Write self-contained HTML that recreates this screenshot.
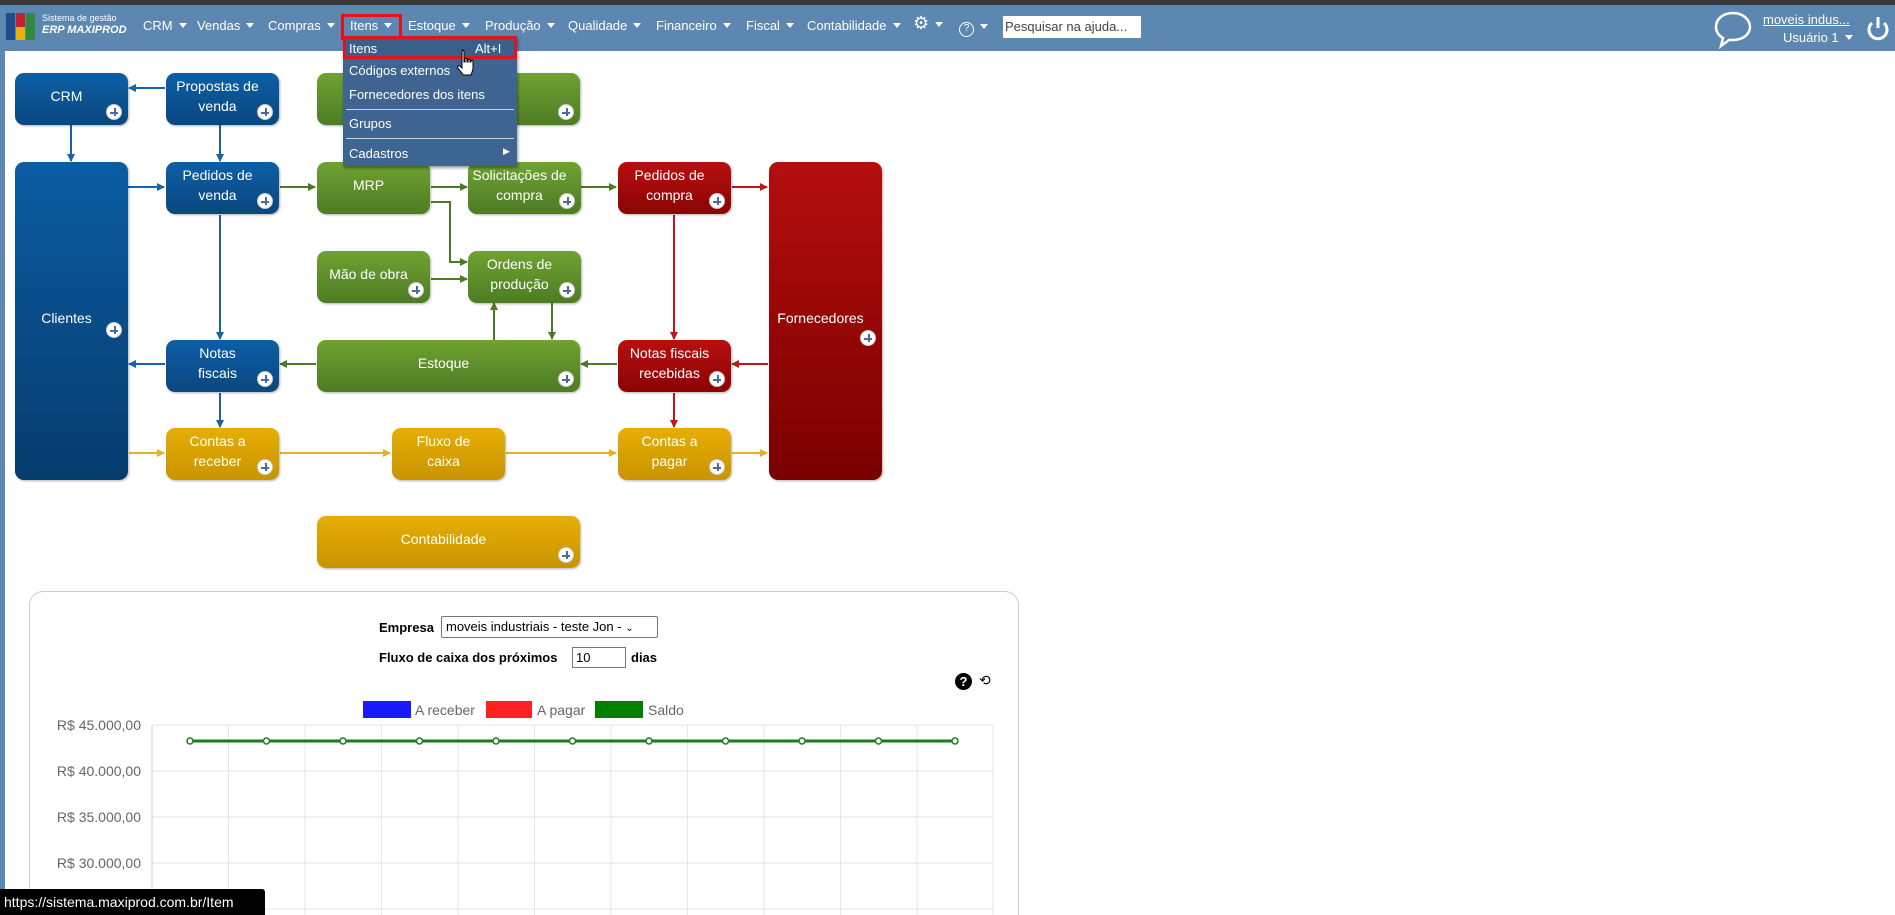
<!DOCTYPE html>
<html style="height:915px;overflow:hidden"><head><meta charset="utf-8">
<style>
*{box-sizing:border-box}
body{margin:0;width:1895px;height:915px;overflow:hidden;background:#fff;font-family:"Liberation Sans",sans-serif;position:relative}
#top{position:absolute;left:0;top:0;width:1895px;height:5px;background:#3a3a3a}
#nav{position:absolute;left:0;top:5px;width:1895px;height:46px;background:#5b87b1;color:#fff;font-size:13px}
#lstrip{position:absolute;left:0;top:51px;width:5px;height:864px;background:#5b87b1}
.ni{position:absolute;top:13px;white-space:nowrap}
.ni:after{content:"";display:inline-block;margin-left:6px;border-left:4px solid transparent;border-right:4px solid transparent;border-top:5px solid #fff;vertical-align:2px}
.bx{position:absolute;border-radius:9px;color:#fff;font-size:14px;text-align:center;display:flex;align-items:center;justify-content:center;line-height:20px;padding:0 10px 6px 0;box-shadow:1px 1px 2px rgba(0,0,0,.3)}
.b{background:linear-gradient(#0d5fa6,#0a477f)}
.b.t{background:linear-gradient(#0b5ca3,#073c6e)}
.g{background:linear-gradient(#6fa232,#4d7c24)}
.r{background:linear-gradient(#b80f0f,#8a0404)}
.r.t{background:linear-gradient(#b50e0e,#7a0000)}
.y{background:linear-gradient(#e6ae05,#c99400)}
.bx i{position:absolute;right:6px;bottom:5px;width:16px;height:16px;border-radius:50%;background:#fff;border:1px solid #ccc}
.bx i:before{content:"";position:absolute;left:3px;top:6.5px;width:8px;height:2px;background:#4a6a99}
.bx i:after{content:"";position:absolute;left:6.5px;top:3px;width:2px;height:8px;background:#4a6a99}
#menu{position:absolute;left:343px;top:36px;width:174px;height:130px;background:#3e6591;color:#fff;font-size:13px;box-shadow:1px 2px 3px rgba(0,0,0,.4)}
#menu div{position:absolute;left:6px}
.sep{position:absolute;left:3px;width:168px;height:1px;background:#c8d4e2}
#panel{position:absolute;left:29px;top:591px;width:990px;height:324px;border:1px solid #ccc;border-bottom:none;border-radius:14px 14px 0 0}
</style></head><body>
<div id="top"></div>
<div id="nav">
 <div style="position:absolute;left:6px;top:8px;width:30px;height:27px;">
  <div style="position:absolute;left:0;top:0;width:9px;height:27px;background:#1f4d8c"></div>
  <div style="position:absolute;left:10px;top:0;width:9px;height:14px;background:#c6212a"></div>
  <div style="position:absolute;left:10px;top:14px;width:9px;height:13px;background:#e8b400"></div>
  <div style="position:absolute;left:20px;top:0;width:9px;height:27px;background:#2e8b3c"></div>
 </div>
 <div style="position:absolute;left:42px;top:8px;font-size:9px;line-height:10px">Sistema de gestão</div>
 <div style="position:absolute;left:42px;top:19px;font-size:11px;font-weight:bold;font-style:italic">ERP MAXIPROD</div>
 <div class="ni" style="left:143px">CRM</div>
 <div class="ni" style="left:197px">Vendas</div>
 <div class="ni" style="left:268px">Compras</div>
 <div style="position:absolute;left:341px;top:9px;width:61px;height:26px;border:3px solid #e0141c"></div>
 <div class="ni" style="left:350px">Itens</div>
 <div class="ni" style="left:408px">Estoque</div>
 <div class="ni" style="left:485px">Produção</div>
 <div class="ni" style="left:568px">Qualidade</div>
 <div class="ni" style="left:656px">Financeiro</div>
 <div class="ni" style="left:746px">Fiscal</div>
 <div class="ni" style="left:807px">Contabilidade</div>
 <div class="ni" style="left:913px;font-size:18px;top:8px">⚙</div>
 <div class="ni" style="left:959px;top:14px"><span style="display:inline-block;width:15px;height:15px;border:1.5px solid #fff;border-radius:50%;font-size:10px;text-align:center;line-height:12px">?</span></div>
 <div style="position:absolute;left:1003px;top:11px;width:138px;height:22px;background:#fff;color:#444;font-size:13px;padding:3px 2px">Pesquisar na ajuda...</div>
 <svg style="position:absolute;left:1712px;top:5px" width="42" height="40"><path d="M21 3C11 3 4 9 4 17c0 5 3 9 7 11l-2 8 8-6c1 0 3 0 4 0 10 0 17-6 17-13S31 3 21 3z" fill="none" stroke="#fff" stroke-width="2.5"/></svg>
 <div style="position:absolute;left:1763px;top:7px;text-decoration:underline;font-size:13px">moveis indus...</div>
 <div class="ni" style="left:1783px;top:25px">Usuário 1</div>
 <svg style="position:absolute;left:1866px;top:10px" width="24" height="26"><path d="M6 8a9 9 0 1 0 12 0" fill="none" stroke="#fff" stroke-width="3"/><path d="M12 2v11" stroke="#fff" stroke-width="3"/></svg>
</div>
<div id="lstrip"></div>

<svg style="position:absolute;left:0;top:0" width="900" height="580">
<defs>
<marker id="mb" markerWidth="8" markerHeight="8" refX="7" refY="4" orient="auto" markerUnits="userSpaceOnUse"><path d="M0 0L8 4L0 8z" fill="#1764a8"/></marker>
<marker id="mg" markerWidth="8" markerHeight="8" refX="7" refY="4" orient="auto" markerUnits="userSpaceOnUse"><path d="M0 0L8 4L0 8z" fill="#4d7a27"/></marker>
<marker id="mr" markerWidth="8" markerHeight="8" refX="7" refY="4" orient="auto" markerUnits="userSpaceOnUse"><path d="M0 0L8 4L0 8z" fill="#c0161a"/></marker>
<marker id="my" markerWidth="8" markerHeight="8" refX="7" refY="4" orient="auto" markerUnits="userSpaceOnUse"><path d="M0 0L8 4L0 8z" fill="#e9b020"/></marker>
</defs>
<g stroke="#1764a8" stroke-width="2" fill="none" marker-end="url(#mb)">
<path d="M165 88H129"/><path d="M71 125V161"/><path d="M220 125V161"/><path d="M128 187H164"/><path d="M220 215V339"/><path d="M165 364H129"/><path d="M220 393V427"/>
</g>
<g stroke="#4d7a27" stroke-width="2" fill="none" marker-end="url(#mg)">
<path d="M280 187H315"/><path d="M431 187H467"/><path d="M431 202H450V262H467"/><path d="M431 279H467"/><path d="M494 340V303"/><path d="M552 303V339"/><path d="M316 364H280"/><path d="M617 364H581"/><path d="M581 187H616"/>
</g>
<g stroke="#c0161a" stroke-width="2" fill="none" marker-end="url(#mr)">
<path d="M732 187H767"/><path d="M674 215V339"/><path d="M768 364H732"/><path d="M674 393V427"/>
</g>
<g stroke="#e9b020" stroke-width="2" fill="none" marker-end="url(#my)">
<path d="M129 453H164"/><path d="M280 453H390"/><path d="M506 453H616"/><path d="M732 453H767"/>
</g>
</svg>

<div class="bx b" style="left:15px;top:73px;width:113px;height:52px">CRM<i></i></div>
<div class="bx b" style="left:166px;top:73px;width:113px;height:52px">Propostas de<br>venda<i></i></div>
<div class="bx g" style="left:317px;top:73px;width:263px;height:52px"><i></i></div>
<div class="bx b t" style="left:15px;top:162px;width:113px;height:318px">Clientes<i style="bottom:auto;top:160px"></i></div>
<div class="bx b" style="left:166px;top:162px;width:113px;height:52px">Pedidos de<br>venda<i></i></div>
<div class="bx g" style="left:317px;top:162px;width:113px;height:52px">MRP</div>
<div class="bx g" style="left:468px;top:162px;width:113px;height:52px">Solicitações de<br>compra<i></i></div>
<div class="bx r" style="left:618px;top:162px;width:113px;height:52px">Pedidos de<br>compra<i></i></div>
<div class="bx r t" style="left:769px;top:162px;width:113px;height:318px">Fornecedores<i style="bottom:auto;top:168px"></i></div>
<div class="bx g" style="left:317px;top:251px;width:113px;height:52px">Mão de obra<i></i></div>
<div class="bx g" style="left:468px;top:251px;width:113px;height:52px">Ordens de<br>produção<i></i></div>
<div class="bx b" style="left:166px;top:340px;width:113px;height:52px">Notas<br>fiscais<i></i></div>
<div class="bx g" style="left:317px;top:340px;width:263px;height:52px">Estoque<i></i></div>
<div class="bx r" style="left:618px;top:340px;width:113px;height:52px">Notas fiscais<br>recebidas<i></i></div>
<div class="bx y" style="left:166px;top:428px;width:113px;height:52px">Contas a<br>receber<i></i></div>
<div class="bx y" style="left:392px;top:428px;width:113px;height:52px">Fluxo de<br>caixa</div>
<div class="bx y" style="left:618px;top:428px;width:113px;height:52px">Contas a<br>pagar<i></i></div>
<div class="bx y" style="left:317px;top:516px;width:263px;height:52px">Contabilidade<i></i></div>

<div id="menu">
 <div style="left:0;top:0;width:174px;height:23px;border:3px solid #e0141c;background:#3a5f8a"></div>
 <div style="top:5px">Itens</div><div style="top:5px;left:132px">Alt+I</div>
 <div style="top:27px">Códigos externos</div>
 <div style="top:51px">Fornecedores dos itens</div>
 <span class="sep" style="top:73px"></span>
 <div style="top:80px">Grupos</div>
 <span class="sep" style="top:102px"></span>
 <div style="top:110px">Cadastros</div><div style="top:110px;left:160px;font-size:9px">▶</div>
</div>
<svg style="position:absolute;left:456px;top:48px" width="20" height="32"><path d="M6 2c1.5 0 2 1 2 2v10h1V11c0-1 2-1 2 0v3h1v-2c0-1 2-1 2 0v2h1v-1c0-1 2-1 2 0v7c0 3-2 6-2 7H7c0-1-4-5-5-7-1-1 0-3 2-2l2 2V4c0-1 .5-2 1-2z" fill="#fff" stroke="#000" stroke-width="1"/></svg>

<div id="panel"></div>
<div style="position:absolute;left:379px;top:620px;font-size:13px;font-weight:bold">Empresa</div>
<div style="position:absolute;left:441px;top:616px;width:217px;height:22px;border:1px solid #777;border-radius:2px;font-size:13px;padding:2px 4px">moveis industriais - teste Jon - <span style="font-size:10px">⌄</span></div>
<div style="position:absolute;left:379px;top:650px;font-size:13px;font-weight:bold">Fluxo de caixa dos próximos</div>
<div style="position:absolute;left:572px;top:647px;width:54px;height:21px;border:1px solid #777;font-size:13px;padding:2px 3px">10</div>
<div style="position:absolute;left:631px;top:650px;font-size:13px;font-weight:bold">dias</div>
<div style="position:absolute;left:955px;top:673px;width:17px;height:17px;border-radius:50%;background:#000;color:#fff;font-weight:bold;font-size:13px;text-align:center;line-height:17px">?</div>
<div style="position:absolute;left:979px;top:672px;font-size:14px">⟲</div>

<svg style="position:absolute;left:0;top:695px" width="1020" height="220">
<rect x="363" y="6" width="48" height="17" fill="#1a1aff"/><text x="415" y="20" font-size="14" fill="#666" font-family="Liberation Sans">A receber</text>
<rect x="486" y="6" width="46" height="17" fill="#ff2020"/><text x="537" y="20" font-size="14" fill="#666" font-family="Liberation Sans">A pagar</text>
<rect x="595" y="6" width="48" height="17" fill="#008000"/><text x="648" y="20" font-size="14" fill="#666" font-family="Liberation Sans">Saldo</text>
<g stroke="#e6e6e6" stroke-width="1">
<path d="M152 30H993M152 76H993M152 122H993M152 168H993M152 214H993"/>
<path d="M228.5 30V220M305 30V220M381.5 30V220M458 30V220M534.5 30V220M611 30V220M687.5 30V220M764 30V220M840.5 30V220M917 30V220M993 30V220"/>
</g>
<path d="M152 30V220" stroke="#ccc"/>
<g font-size="14" fill="#666" font-family="Liberation Sans" text-anchor="end">
<text x="141" y="35">R$ 45.000,00</text><text x="141" y="81">R$ 40.000,00</text><text x="141" y="127">R$ 35.000,00</text><text x="141" y="173">R$ 30.000,00</text>
</g>
<path d="M190 46H955" stroke="#1a7d1a" stroke-width="3"/>
<g fill="#fff" stroke="#1a7d1a" stroke-width="1.5">
<circle cx="190" cy="46" r="3"/><circle cx="266.5" cy="46" r="3"/><circle cx="343" cy="46" r="3"/><circle cx="419.5" cy="46" r="3"/><circle cx="496" cy="46" r="3"/><circle cx="572.5" cy="46" r="3"/><circle cx="649" cy="46" r="3"/><circle cx="725.5" cy="46" r="3"/><circle cx="802" cy="46" r="3"/><circle cx="878.5" cy="46" r="3"/><circle cx="955" cy="46" r="3"/>
</g>
</svg>
<div style="position:absolute;left:0;top:889px;width:265px;height:26px;background:#000;color:#fff;font-size:14px;padding:5px 4px;border-top-right-radius:3px">https://sistema.maxiprod.com.br/Item</div>
</body></html>
